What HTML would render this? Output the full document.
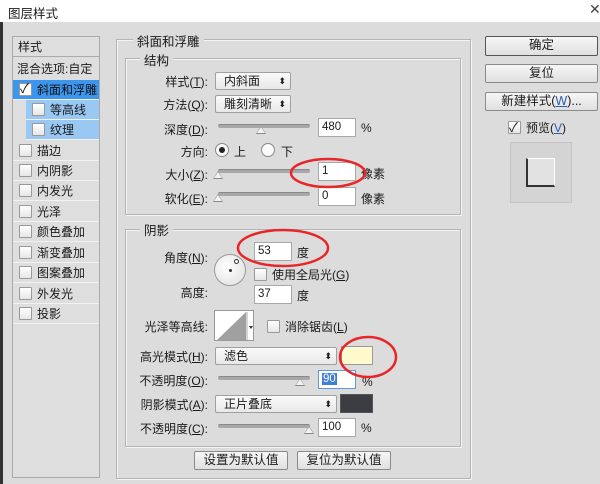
<!DOCTYPE html>
<html><head><meta charset="utf-8"><style>
*{box-sizing:border-box;margin:0;padding:0}
body{width:600px;height:484px;overflow:hidden;background:#dcdcdc;font-family:"Liberation Sans","Noto Sans CJK SC",sans-serif;font-size:12px;color:#1a1a1a;position:relative}
.a{position:absolute;white-space:nowrap}
.title{left:0;top:0;width:600px;height:22px;background:#fff}
.fs{position:absolute;border:1px solid #b4b4b4;box-shadow:1px 1px 0 #f4f4f4 inset,1px 1px 0 #f4f4f4}
.lg{position:absolute;background:#dcdcdc;padding:0 4px;font-size:12.5px}
.btn{position:absolute;border:1px solid #8a8a8a;border-radius:2px;background:linear-gradient(#f6f6f6,#e0e0e0);text-align:center;line-height:17px;font-size:12.5px}
.dd{position:absolute;border:1px solid #a0a0a0;border-radius:2px;background:linear-gradient(#fafafa,#e8e8e8);padding-left:8px;line-height:16px;height:18px}
.dd:after{content:"⬍";position:absolute;right:4px;top:0;font-size:9px}
.in{position:absolute;background:#fff;border:1px solid #a8a8a8;height:19px;line-height:17px;padding-left:3px;font-size:11.5px}
.sl{position:absolute;height:4px;background:#a8a8a8;border-radius:2px;border-top:1px solid #888}
.th{position:absolute;width:0;height:0;border-left:5px solid transparent;border-right:5px solid transparent;border-bottom:8px solid #888}
.th:after{content:"";position:absolute;left:-4px;top:1px;border-left:4px solid transparent;border-right:4px solid transparent;border-bottom:6px solid #f2f2f2}
.cb{position:absolute;width:13px;height:13px;border:1px solid #999;background:linear-gradient(#fff,#e6e6e6);border-radius:1px}
.row{position:absolute;left:13px;width:86px;height:20px;border-bottom:1px solid #f2f2f2;line-height:20px}
.row .cb{left:6px;top:3px}
.row span{position:absolute;left:24px}
.lb{position:absolute;text-align:right;width:100px}
</style></head><body>
<div class="a title"></div>
<div class="a" style="left:0;top:22px;width:3px;height:462px;background:#333"></div>
<div class="a" style="left:8px;top:3px;font-size:12.5px">图层样式</div>
<div class="a" style="left:589px;top:1px;font-size:14px;color:#444">✕</div>

<!-- left panel -->
<div class="a" style="left:12px;top:36px;width:88px;height:442px;border:1px solid #aaa;background:#dedede"></div>
<div class="a" style="left:13px;top:37px;width:86px;height:20px;border-bottom:1px solid #aaa"></div>
<div class="a" style="left:18px;top:38px">样式</div>
<div class="a" style="left:17px;top:60px">混合选项:自定</div>
<div class="row" style="top:80px;background:#3d96ee;color:#111"><div class="cb" style="background:#fff"></div><span style="left:7px;top:-1px;position:absolute;font-size:13px">✓</span><span>斜面和浮雕</span></div>
<div class="row" style="top:100px;left:26px;width:73px;background:#99c8f3"><div class="cb"></div><span>等高线</span></div>
<div class="row" style="top:120px;left:26px;width:73px;background:#99c8f3"><div class="cb"></div><span>纹理</span></div>
<div class="row" style="top:141px"><div class="cb"></div><span>描边</span></div>
<div class="row" style="top:161px"><div class="cb"></div><span>内阴影</span></div>
<div class="row" style="top:181px"><div class="cb"></div><span>内发光</span></div>
<div class="row" style="top:202px"><div class="cb"></div><span>光泽</span></div>
<div class="row" style="top:222px"><div class="cb"></div><span>颜色叠加</span></div>
<div class="row" style="top:243px"><div class="cb"></div><span>渐变叠加</span></div>
<div class="row" style="top:263px"><div class="cb"></div><span>图案叠加</span></div>
<div class="row" style="top:284px"><div class="cb"></div><span>外发光</span></div>
<div class="row" style="top:304px"><div class="cb"></div><span>投影</span></div>

<!-- main group -->
<div class="fs" style="left:116px;top:39px;width:355px;height:440px"></div>
<div class="lg" style="left:133px;top:31px">斜面和浮雕</div>
<div class="fs" style="left:125px;top:58px;width:336px;height:157px"></div>
<div class="lg" style="left:140px;top:50px">结构</div>
<div class="fs" style="left:125px;top:229px;width:336px;height:218px"></div>
<div class="lg" style="left:140px;top:220px">阴影</div>

<div class="lb" style="left:108px;top:73px">样式(<u>T</u>):</div>
<div class="dd" style="left:215px;top:72px;width:76px">内斜面</div>
<div class="lb" style="left:108px;top:96px">方法(<u>Q</u>):</div>
<div class="dd" style="left:215px;top:95px;width:76px">雕刻清晰</div>
<div class="lb" style="left:108px;top:121px">深度(<u>D</u>):</div>
<div class="sl" style="left:218px;top:124px;width:92px"></div><div class="th" style="left:256px;top:126px"></div>
<div class="in" style="left:318px;top:118px;width:38px">480</div>
<div class="a" style="left:361px;top:121px">%</div>
<div class="lb" style="left:108px;top:143px">方向:</div>
<div class="a" style="left:215px;top:143px;width:14px;height:14px;border:1px solid #888;border-radius:50%;background:#fafafa"></div>
<div class="a" style="left:219px;top:147px;width:6px;height:6px;border-radius:50%;background:#222"></div>
<div class="a" style="left:234px;top:143px">上</div>
<div class="a" style="left:261px;top:143px;width:14px;height:14px;border:1px solid #888;border-radius:50%;background:#fafafa"></div>
<div class="a" style="left:281px;top:143px">下</div>
<div class="lb" style="left:108px;top:166px">大小(<u>Z</u>):</div>
<div class="sl" style="left:218px;top:169px;width:92px"></div><div class="th" style="left:213px;top:171px"></div>
<div class="in" style="left:318px;top:162px;width:38px">1</div>
<div class="a" style="left:361px;top:165px">像素</div>
<div class="lb" style="left:108px;top:190px">软化(<u>E</u>):</div>
<div class="sl" style="left:218px;top:192px;width:92px"></div><div class="th" style="left:213px;top:194px"></div>
<div class="in" style="left:318px;top:187px;width:38px">0</div>
<div class="a" style="left:361px;top:190px">像素</div>

<div class="lb" style="left:108px;top:249px">角度(<u>N</u>):</div>
<div class="a" style="left:214px;top:254px;width:32px;height:32px;border:1px solid #999;border-radius:50%;background:radial-gradient(circle at 40% 40%,#fff,#ddd)"></div>
<div class="a" style="left:229px;top:269px;width:3px;height:3px;background:#333;border-radius:50%"></div>
<div class="a" style="left:234px;top:259px;width:5px;height:5px;border:1px solid #333;border-radius:50%;background:#fff"></div>
<div class="in" style="left:254px;top:242px;width:38px">53</div>
<div class="a" style="left:297px;top:244px">度</div>
<div class="cb" style="left:254px;top:268px"></div>
<div class="a" style="left:272px;top:266px">使用全局光(<u>G</u>)</div>
<div class="lb" style="left:108px;top:284px">高度:</div>
<div class="in" style="left:254px;top:285px;width:38px">37</div>
<div class="a" style="left:297px;top:287px">度</div>
<div class="lb" style="left:108px;top:318px">光泽等高线:</div>
<div class="a" style="left:214px;top:310px;width:40px;height:31px;border:1px solid #999;background:#fff;overflow:hidden">
<svg width="38" height="29" style="position:absolute;left:1px;top:1px"><polygon points="0,29 30,0 30,29" fill="#a0a0a0"/><line x1="31" y1="0" x2="31" y2="29" stroke="#aaa"/><polygon points="33,14 37,14 35,17" fill="#333"/></svg></div>
<div class="cb" style="left:267px;top:320px"></div>
<div class="a" style="left:285px;top:318px">消除锯齿(<u>L</u>)</div>
<div class="lb" style="left:108px;top:348px">高光模式(<u>H</u>):</div>
<div class="dd" style="left:215px;top:347px;width:122px">滤色</div>
<div class="a" style="left:341px;top:346px;width:32px;height:19px;background:#fffacd;border:1px solid #999"></div>
<div class="lb" style="left:108px;top:372px">不透明度(<u>O</u>):</div>
<div class="sl" style="left:218px;top:376px;width:92px"></div><div class="th" style="left:295px;top:378px"></div>
<div class="in" style="left:318px;top:370px;width:38px;border-color:#5b9bd5"><span style="background:#3f7fd6;color:#fff;padding:0 1px">90</span></div>
<div class="a" style="left:362px;top:375px">%</div>
<div class="lb" style="left:108px;top:396px">阴影模式(<u>A</u>):</div>
<div class="dd" style="left:215px;top:395px;width:122px">正片叠底</div>
<div class="a" style="left:340px;top:394px;width:33px;height:19px;background:#3b3d42;border:1px solid #555"></div>
<div class="lb" style="left:108px;top:420px">不透明度(<u>C</u>):</div>
<div class="sl" style="left:218px;top:424px;width:92px"></div><div class="th" style="left:304px;top:426px"></div>
<div class="in" style="left:318px;top:418px;width:38px">100</div>
<div class="a" style="left:361px;top:421px">%</div>
<div class="btn" style="left:194px;top:451px;width:94px;height:19px">设置为默认值</div>
<div class="btn" style="left:297px;top:451px;width:94px;height:19px">复位为默认值</div>

<!-- right -->
<div class="btn" style="left:485px;top:36px;width:113px;height:20px;border-color:#555">确定</div>
<div class="btn" style="left:485px;top:64px;width:113px;height:19px">复位</div>
<div class="btn" style="left:485px;top:92px;width:113px;height:19px">新建样式(<u style="color:#2a5db0">W</u>)...</div>
<div class="cb" style="left:508px;top:121px"></div>
<div class="a" style="left:509px;top:117px;font-size:13px">✓</div>
<div class="a" style="left:526px;top:119px">预览(<u style="color:#2a5db0">V</u>)</div>
<div class="a" style="left:510px;top:142px;width:62px;height:61px;background:#d4d4d4;border:1px solid #c4c4c4"></div>
<div class="a" style="left:526px;top:158px;width:29px;height:29px;background:#e2e2e2;border-left:2px solid #333;border-bottom:2px solid #333;border-top:1px solid #fff;border-right:1px solid #fff"></div>

<svg class="a" style="left:0;top:0" width="600" height="484">
<g fill="none" stroke="#e8262a" stroke-width="2.5">
<ellipse cx="328" cy="173" rx="37" ry="14"/>
<ellipse cx="283" cy="248" rx="45" ry="18"/>
<ellipse cx="368" cy="357" rx="28" ry="20"/>
</g></svg>
</body></html>
